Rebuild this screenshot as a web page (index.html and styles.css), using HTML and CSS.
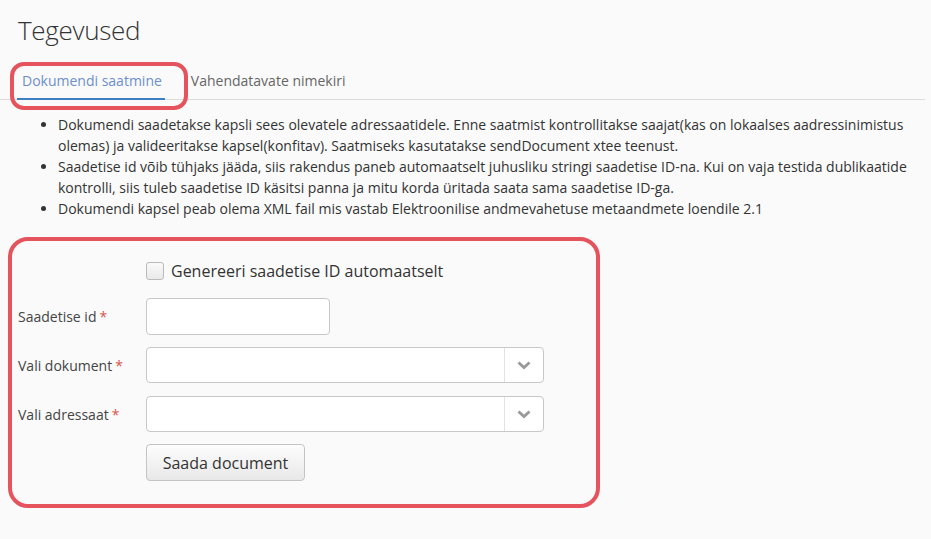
FILE: index.html
```html
<!DOCTYPE html>
<html lang="et">
<head>
<meta charset="utf-8">
<title>Tegevused</title>
<link rel="stylesheet" href="styles.css">
</head>
<body>
<div class="page">
  <h1 class="title">Tegevused</h1>
  <div class="tabs">
    <a class="tab active">Dokumendi saatmine</a>
    <a class="tab">Vahendatavate nimekiri</a>
    <div class="mark mark-tab"></div>
  </div>
  <ul class="notes">
    <li>Dokumendi saadetakse kapsli sees olevatele adressaatidele. Enne saatmist kontrollitakse saajat(kas on lokaalses aadressinimistus olemas) ja valideeritakse kapsel(konfitav). Saatmiseks kasutatakse sendDocument xtee teenust.</li>
    <li>Saadetise id võib tühjaks jääda, siis rakendus paneb automaatselt juhusliku stringi saadetise ID-na. Kui on vaja testida dublikaatide kontrolli, siis tuleb saadetise ID käsitsi panna ja mitu korda üritada saata sama saadetise ID-ga.</li>
    <li>Dokumendi kapsel peab olema XML fail mis vastab Elektroonilise andmevahetuse metaandmete loendile 2.1</li>
  </ul>
  <form class="form">
    <div class="row row-check">
      <span class="label"></span>
      <label class="check"><span class="box"></span>Genereeri saadetise ID automaatselt</label>
    </div>
    <div class="row row-id">
      <span class="label">Saadetise id<span class="req">*</span></span>
      <span class="input short"></span>
    </div>
    <div class="row row-doc">
      <span class="label">Vali dokument<span class="req">*</span></span>
      <span class="select"><span class="sel-val"></span><span class="sel-btn"><svg width="14" height="9" viewBox="0 0 14 9"><path d="M1.5 1.5 L7 6.5 L12.5 1.5" fill="none" stroke="#999" stroke-width="2.8"/></svg></span></span>
    </div>
    <div class="row row-adr">
      <span class="label">Vali adressaat<span class="req">*</span></span>
      <span class="select"><span class="sel-val"></span><span class="sel-btn"><svg width="14" height="9" viewBox="0 0 14 9"><path d="M1.5 1.5 L7 6.5 L12.5 1.5" fill="none" stroke="#999" stroke-width="2.8"/></svg></span></span>
    </div>
    <div class="row row-btn">
      <span class="label"></span>
      <button type="button" class="btn">Saada document</button>
    </div>
  </form>
</div>
</body>
</html>
```
FILE: styles.css
```css
html, body {
  margin: 0;
  padding: 0;
  background: #fafafa;
}
body {
  font-family: "Open Sans", "Liberation Sans", sans-serif;
  color: #333;
  width: 931px;
  height: 539px;
  overflow: hidden;
}
.page {
  padding-top: 12px;
}
.title {
  margin: 0 0 0 18px;
  font-size: 26px;
  font-weight: 300;
  line-height: 36px;
  color: #333;
  letter-spacing: -0.3px;
}
.tabs {
  position: relative;
  display: flex;
  margin-top: 12px;
  padding-left: 17px;
  border-bottom: 1px solid #dcdcdc;
  margin-right: 6px;
}
.tab {
  display: block;
  font-size: 14px;
  line-height: 20px;
  padding: 11px 3px 7px 5px;
  margin-bottom: -1px;
  color: #666;
  border-bottom: 2px solid transparent;
}
.tab.active {
  color: #6d8fcb;
  border-bottom-color: #3d7fc1;
  margin-right: 21px;
}
.mark {
  position: absolute;
  border: 4px solid #e5535d;
  pointer-events: none;
}
.mark-tab {
  left: 10px;
  top: 2px;
  width: 170px;
  height: 40px;
  border-radius: 14px;
}
.notes {
  margin: 14px 0 0 0;
  padding: 0 12px 0 58px;
  font-size: 14px;
  line-height: 21px;
  color: #333;
}
.form {
  display: block;
  margin: 18px 0 0 8px;
  width: 584px;
  height: 263px;
  border: 4px solid #e5535d;
  border-radius: 20px;
  padding: 0;
  box-sizing: content-box;
  font-size: 14px;
}
.row {
  display: flex;
  align-items: center;
}
.label {
  width: 128px;
  padding-left: 6px;
  flex: none;
  color: #444;
  font-size: 14px;
}
.req {
  color: #d9534f;
  margin-left: 3px;
}
.row-check {
  margin-top: 20px;
  height: 20px;
}
.check {
  display: flex;
  align-items: center;
  font-size: 16px;
  color: #333;
}
.box {
  width: 16px;
  height: 16px;
  border: 1px solid #bbb;
  border-radius: 3px;
  background: linear-gradient(#fafafa, #e9e9e9);
  margin-right: 7px;
}
.row-id {
  margin-top: 17px;
}
.input {
  display: block;
  height: 35px;
  background: #fff;
  border: 1px solid #c8c8c8;
  border-radius: 4px;
}
.input.short {
  width: 182px;
}
.row-doc {
  margin-top: 12px;
}
.row-adr {
  margin-top: 13px;
}
.select {
  display: flex;
  width: 398px;
  box-sizing: border-box;
  height: 36px;
  background: #fff;
  border: 1px solid #c8c8c8;
  border-radius: 4px;
}
.sel-val {
  flex: 1;
}
.sel-btn {
  width: 38px;
  border-left: 1px solid #e2e2e2;
  display: flex;
  align-items: center;
  justify-content: center;
}
.row-btn {
  margin-top: 12px;
}
.btn {
  width: 159px;
  height: 37px;
  font-family: "Open Sans", "Liberation Sans", sans-serif;
  font-size: 16px;
  color: #333;
  background: linear-gradient(#fdfdfd, #e8e8e8);
  border: 1px solid #c4c4c4;
  border-radius: 4px;
  padding: 0;
}
```
